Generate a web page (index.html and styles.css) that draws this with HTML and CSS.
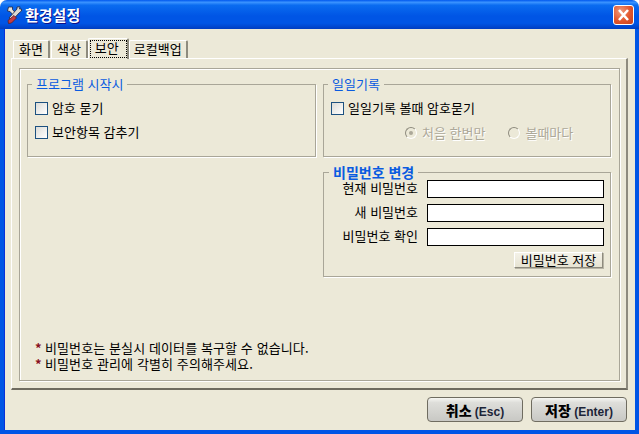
FILE: index.html
```html
<!DOCTYPE html>
<html lang="ko">
<head>
<meta charset="utf-8">
<title>환경설정</title>
<link rel="stylesheet" href="styles.css">
</head>
<body>
<div class="window">
  <header class="titlebar">
    <svg class="app-icon" width="18" height="18" viewBox="0 0 18 18">
      <path d="M3.5 1 L7.5 1 L7.5 3.5 L11 7.5 L9 10 L5 5.5 L2.5 5 Z" fill="#e8e4dc" stroke="#23233a" stroke-width=".8"/>
      <path d="M4 12 L12 3 L12 1 L15 .8 L14.5 3 L16.5 3 L16.5 5 L14.5 6.5 L7.5 14 Z" fill="#dcdad4" stroke="#23233a" stroke-width=".8"/>
      <path d="M9 9.5 L11.5 12 L6.5 17 L3.5 17.5 L3 14.5 Z" fill="#c43c44" stroke="#5a2028" stroke-width=".8"/>
    </svg>
    <span class="title">환경설정</span>
    <button class="close" aria-label="닫기">
      <svg width="21" height="20" viewBox="0 0 21 20"><path d="M6 5 L15 15 M15 5 L6 15" stroke="#fff" stroke-width="2.6"/></svg>
    </button>
  </header>
  <div class="client">
    <nav class="tabs">
      <span class="tab">화면</span>
      <span class="tab">색상</span>
      <span class="tab tab-active"><span class="focus">보안</span></span>
      <span class="tab tab-last">로컬백업</span>
    </nav>
    <section class="sheet">
      <div class="inner">
        <div class="groups">
          <fieldset class="group g-start">
            <legend>프로그램 시작시</legend>
            <label class="check"><i class="box"></i>암호 묻기</label>
            <label class="check"><i class="box"></i>보안항목 감추기</label>
          </fieldset>
          <fieldset class="group g-diary">
            <legend>일일기록</legend>
            <label class="check"><i class="box"></i>일일기록 볼때 암호묻기</label>
            <div class="radios">
              <label class="radio"><i class="dot dot-on"></i>처음 한번만</label>
              <label class="radio"><i class="dot"></i>볼때마다</label>
            </div>
          </fieldset>
          <fieldset class="group g-pass">
            <legend class="legend-bold">비밀번호 변경</legend>
            <div class="field"><span class="field-label">현재 비밀번호</span><input class="input" type="password"></div>
            <div class="field"><span class="field-label">새 비밀번호</span><input class="input" type="password"></div>
            <div class="field"><span class="field-label">비밀번호 확인</span><input class="input" type="password"></div>
            <div class="save-row"><button class="save">비밀번호 저장</button></div>
          </fieldset>
        </div>
        <div class="notes">
          <p><b class="star">*</b>비밀번호는 분실시 데이터를 복구할 수 없습니다.</p>
          <p><b class="star">*</b>비밀번호 관리에 각별히 주의해주세요.</p>
        </div>
      </div>
    </section>
    <footer class="actions">
      <button class="action"><b>취소</b> (Esc)</button>
      <button class="action"><b>저장</b> (Enter)</button>
    </footer>
  </div>
</div>
</body>
</html>
```
FILE: styles.css
```css
* { box-sizing: border-box; }
html, body { margin: 0; padding: 0; }
body {
  width: 639px;
  height: 434px;
  overflow: hidden;
  font-family: "Noto Sans CJK KR", "Liberation Sans", sans-serif;
  font-size: 13px;
  color: #000;
}
.window {
  width: 639px;
  height: 434px;
  display: flex;
  flex-direction: column;
  background: #ece9d8;
  border-radius: 7px 7px 0 0;
  overflow: hidden;
}
.titlebar {
  height: 29px;
  flex: none;
  display: flex;
  align-items: center;
  padding: 0 5px;
  background: linear-gradient(180deg, #0058ee 0%, #3a93ff 8%, #0a6cf0 18%, #0055e5 55%, #0055e5 80%, #0047d0 92%, #003dc0 100%);
}
.app-icon { flex: none; margin-right: 2px; }
.title {
  flex: 1;
  color: #fff;
  font-weight: 700;
  font-size: 15px;
  line-height: 16px;
  text-shadow: 1px 1px 0 #0f1089;
}
.close {
  width: 21px;
  height: 20px;
  padding: 0;
  display: block;
  border: 1px solid #fff;
  border-radius: 3px;
  background: radial-gradient(circle at 35% 30%, #f09a7c, #e2552c 55%, #c8401c);
}
.close svg { display: block; margin: -1px; }
.client {
  flex: 1;
  display: flex;
  flex-direction: column;
  min-height: 0;
  border-style: solid;
  border-color: #0055e5;
  border-width: 0 4px 4px;
  padding: 7px 7px 0;
  box-shadow: inset 1px 0 0 #0831d9;
}
.tabs {
  height: 22px;
  flex: none;
  display: flex;
  align-items: flex-end;
  padding-left: 2px;
  position: relative;
  z-index: 1;
}
.tab {
  height: 18px;
  padding: 0 5px;
  margin-right: 1px;
  line-height: 15px;
  background: #ece9d8;
  border: 1px solid #fff;
  border-right: 2px solid #8e8b7e;
  border-bottom: 0;
  border-radius: 2px 2px 0 0;
  white-space: nowrap;
}
.tab-active {
  height: 21px;
  margin: 0 0 0 -1px;
  padding: 1px 0 0 1px;
  position: relative;
  top: 1px;
}
.tab-last { padding: 0 4px; }
.focus {
  display: block;
  width: 37px;
  height: 18px;
  line-height: 14px;
  padding: 0 4px;
  border: 1px dotted #000;
}
.sheet {
  width: 617px;
  height: 332px;
  flex: none;
  padding: 9px 0 0 7px;
  background: #ece9d8;
  border: 1px solid #fff;
  border-right: 2px solid #8e8b7e;
  border-bottom: 2px solid #6f6c60;
}
.inner {
  width: 601px;
  height: 313px;
  display: flex;
  flex-direction: column;
  padding: 0 7px 8px;
  border: 1px solid #a9a698;
  box-shadow: 1px 1px 0 #fff, inset 1px 1px 0 #fff;
}
.groups {
  display: grid;
  grid-template-columns: 289px 288px;
  grid-template-rows: 81px 113px;
  column-gap: 7px;
  row-gap: 7px;
  margin-top: 7px;
}
.group {
  margin: 0;
  min-width: 0;
  padding: 0 7px;
  border: 1px solid #a9a698;
  box-shadow: 1px 1px 0 #fff;
}
.g-pass { grid-column: 2; grid-row: 2; }
legend {
  margin-left: -3px;
  padding: 0 4px;
  font-size: 13px;
  line-height: 16px;
  color: #0a5be0;
}
.legend-bold { font-weight: 700; font-size: 14px; margin-left: -2px; }
.check {
  display: flex;
  align-items: center;
  height: 16px;
  margin-top: 8px;
  line-height: 16px;
}
.check + .check { margin-top: 8px; }
.box {
  width: 13px;
  height: 13px;
  margin-right: 4px;
  flex: none;
  border: 1px solid #1c5180;
  background: linear-gradient(135deg, #dcdcd7, #ffffff);
}
.radios {
  display: flex;
  gap: 23px;
  margin: 9px 0 0 74px;
}
.radio {
  display: flex;
  align-items: center;
  height: 16px;
  line-height: 16px;
  color: #aca899;
  text-shadow: 1px 1px 0 #fff;
}
.dot {
  width: 12px;
  height: 12px;
  margin-right: 5px;
  flex: none;
  border-radius: 50%;
  border: 1px solid #8e8b7e;
  border-right-color: #fff;
  border-bottom-color: #fff;
  background: #ece9d8;
  display: flex;
  align-items: center;
  justify-content: center;
}
.dot-on::after {
  content: "";
  width: 4px;
  height: 4px;
  border-radius: 50%;
  background: #aca899;
}
.field {
  display: flex;
  align-items: center;
  height: 18px;
  margin-bottom: 6px;
}
.field-label {
  width: 87px;
  padding-bottom: 2px;
  text-align: right;
  line-height: 16px;
  white-space: nowrap;
  flex: none;
}
.input {
  width: 177px;
  height: 18px;
  margin-left: 9px;
  padding: 0;
  flex: none;
  border: 1px solid #000;
  background: #fff;
  border-radius: 0;
  outline: 0;
}
.save-row { display: flex; justify-content: flex-end; }
.save {
  width: 89px;
  height: 16px;
  padding: 0;
  font: inherit;
  line-height: 14px;
  color: #000;
  background: linear-gradient(180deg, #f4f2e8, #e6e3d2);
  border: 1px solid;
  border-color: #fff #8e8b7e #8e8b7e #fff;
  box-shadow: 1px 1px 0 #b8b5a6;
  border-radius: 0;
}
.notes { margin-top: auto; padding-left: 8px; }
.notes p { margin: 0; line-height: 16px; height: 16px; display: flex; letter-spacing: .1px; }
.star {
  width: 10px;
  flex: none;
  color: #8a1020;
  font-weight: 700;
}
.actions {
  display: flex;
  justify-content: flex-end;
  gap: 8px;
  padding: 7px 1px 0 0;
}
.action {
  width: 96px;
  height: 25px;
  padding: 0;
  font-family: "Liberation Sans", "Noto Sans CJK KR", sans-serif;
  font-size: 12px;
  font-weight: 700;
  color: #1c2438;
  border: 1px solid #6f6c60;
  border-radius: 4px;
  background: linear-gradient(180deg, #f6f6f2 0%, #dededa 20%, #c8c8c4 100%);
}
.action b { font-size: 14px; color: #000; }
```
